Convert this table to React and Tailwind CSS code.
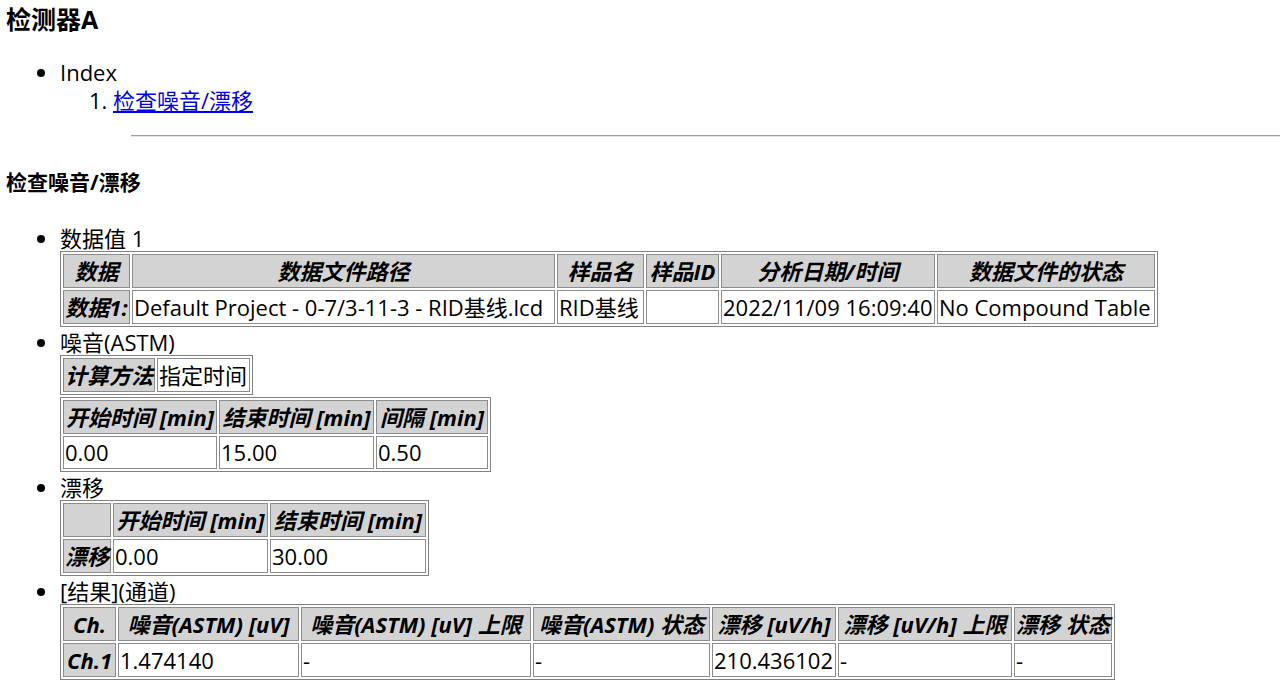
const data1 = {
  head: [
    { t: '数据', w: 67 },
    { t: '数据文件路径', w: 423 },
    { t: '样品名', w: 87 },
    { t: '样品ID', w: 73 },
    { t: '分析日期/时间', w: 214 },
    { t: '数据文件的状态', w: 218 },
  ],
  rows: [['数据1:', 'Default Project - 0-7/3-11-3 - RID基线.lcd', 'RID基线', '', '2022/11/09 16:09:40', 'No Compound Table']],
};

const noise = {
  head: [
    { t: '开始时间 [min]', w: 154 },
    { t: '结束时间 [min]', w: 155 },
    { t: '间隔 [min]', w: 112 },
  ],
  rows: [['0.00', '15.00', '0.50']],
  plain: true,
};

const drift = {
  head: [
    { t: '', w: 47 },
    { t: '开始时间 [min]', w: 155 },
    { t: '结束时间 [min]', w: 156 },
  ],
  rows: [['漂移', '0.00', '30.00']],
};

const result = {
  head: [
    { t: 'Ch.', w: 53 },
    { t: '噪音(ASTM) [uV]', w: 181 },
    { t: '噪音(ASTM) [uV] 上限', w: 230 },
    { t: '噪音(ASTM) 状态', w: 177 },
    { t: '漂移 [uV/h]', w: 124 },
    { t: '漂移 [uV/h] 上限', w: 174 },
    { t: '漂移 状态', w: 96 },
  ],
  rows: [['Ch.1', '1.474140', '-', '-', '210.436102', '-', '-']],
};

const th = 'border border-[#8c8c8c] bg-[#d3d3d3] p-[1px] h-[34px] font-bold italic text-center whitespace-nowrap';
const td = 'border border-[#8c8c8c] bg-white p-[1px] h-[33px] text-left whitespace-nowrap';

function Table({ spec, className = '' }) {
  return (
    <table className={`border-separate border-spacing-[2px] border border-[#808080] leading-[29px] ${className}`}>
      <thead>
        <tr>
          {spec.head.map((h, i) => (
            <th key={i} className={th} style={{ width: h.w }}>{h.t}</th>
          ))}
        </tr>
      </thead>
      <tbody>
        {spec.rows.map((r, i) => (
          <tr key={i}>
            {r.map((c, j) =>
              j === 0 && !spec.plain ? (
                <th key={j} className={th}>{c}</th>
              ) : (
                <td key={j} className={td}>{c}</td>
              )
            )}
          </tr>
        ))}
      </tbody>
    </table>
  );
}

export default function App() {
  return (
    <div className="min-h-screen bg-white text-black text-[22px] pl-[6px]" style={{ fontFamily: '"Open Sans", "Noto Sans CJK SC", sans-serif' }}>
      <h3 className="pt-[4px] text-[25px] font-bold leading-[30px]">检测器A</h3>

      <ul className="list-disc pl-[54px] mt-[24px] leading-[28px]">
        <li>
          Index
          <ol className="list-decimal pl-[53px]">
            <li>
              <a href="#noise" className="text-[#0000ee] underline">检查噪音/漂移</a>
            </li>
          </ol>
        </li>
      </ul>
      <div className="ml-[125px] mt-[21px] border-t border-b border-t-[#a0a0a0] border-b-[#e4e4e4]" />

      <h4 id="noise" className="mt-[31px] text-[21px] font-bold leading-[28px]">检查噪音/漂移</h4>

      <ul className="list-disc pl-[54px] mt-[29px] leading-[26px]">
        <li>
          数据值 1
          <Table spec={data1} />
        </li>
        <li className="mt-[2px]">
          噪音(ASTM)
          <table className="border-separate border-spacing-[2px] border border-[#808080] leading-[29px]">
            <tbody>
              <tr>
                <th className={th} style={{ width: 90 }}>计算方法</th>
                <td className={td} style={{ width: 93 }}>指定时间</td>
              </tr>
            </tbody>
          </table>
          <Table spec={noise} className="mt-[2px]" />
        </li>
        <li className="mt-[2px]">
          漂移
          <Table spec={drift} />
        </li>
        <li className="mt-[2px]">
          [结果](通道)
          <Table spec={result} />
        </li>
      </ul>
    </div>
  );
}
